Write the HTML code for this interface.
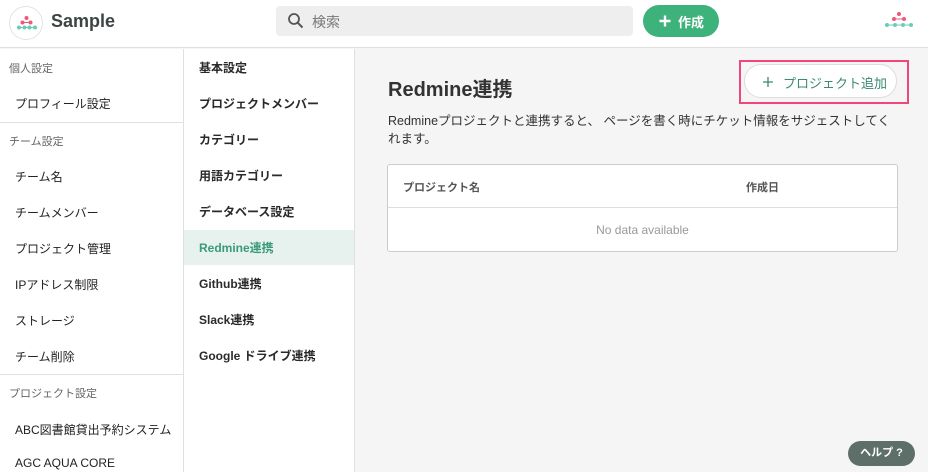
<!DOCTYPE html>
<html><head><meta charset="utf-8"><style>
*{box-sizing:border-box;margin:0;padding:0}
body{width:928px;height:472px;overflow:hidden;background:#f5f5f5;font-family:"Liberation Sans","Noto Sans CJK JP",sans-serif;color:#222;position:relative}
.hdr{position:absolute;left:0;top:0;width:928px;height:48px;background:#fff;border-bottom:1px solid #e0e0e0}
.abs{position:absolute}
.logo{left:9px;top:6px;width:34px;height:34px;border-radius:50%;border:1px solid #e3e3e3;background:#fff}
.title{left:51px;top:11px;font-size:18px;font-weight:bold;color:#3c4444}
.search{left:276px;top:6px;width:357px;height:30px;background:#eeeeee;border-radius:4px}
.search span{position:absolute;left:36px;top:6px;font-size:14px;color:#777}
.create{left:643px;top:5px;width:76px;height:32px;background:#3db37b;border-radius:16px;color:#fff;font-size:13px;font-weight:bold}
.side1{left:0;top:49px;width:184px;height:423px;background:#fff;border-right:1px solid #e0e0e0}
.side2{left:184px;top:49px;width:171px;height:423px;background:#fff;border-right:1px solid #e0e0e0}
.lbl{position:absolute;left:9px;font-size:11px;color:#666}
.it{position:absolute;left:15px;font-size:12px;color:#222}
.it2{position:absolute;left:15px;font-size:12px;font-weight:bold;color:#2a2a2a}
.div{position:absolute;left:0;width:183px;height:1px;background:#e0e0e0}
.active{position:absolute;left:0;top:181px;width:170px;height:35px;background:#e7f2ef}
</style></head><body>
<div class="hdr">
 <div class="abs logo"><svg width="34" height="34" viewBox="0 0 34 34"><g fill="#f0577a"><circle cx="16.5" cy="11" r="2"/><circle cx="12.5" cy="15.5" r="2"/><circle cx="20.5" cy="15.5" r="2"/></g><line x1="8.5" y1="20.5" x2="25" y2="20.5" stroke="#6ccbb5" stroke-width="1"/><line x1="12" y1="15.5" x2="21" y2="15.5" stroke="#f0577a" stroke-width="1"/><g fill="#6ccbb5"><circle cx="9" cy="20.5" r="2"/><circle cx="14.5" cy="20.5" r="2"/><circle cx="19.5" cy="20.5" r="2"/><circle cx="25" cy="20.5" r="2"/></g></svg></div>
 <div class="abs title">Sample</div>
 <div class="abs search"><svg class="abs" style="left:11px;top:6px" width="18" height="18" viewBox="0 0 18 18"><circle cx="7" cy="7" r="5" fill="none" stroke="#555" stroke-width="1.8"/><line x1="10.7" y1="10.7" x2="15.5" y2="15.5" stroke="#555" stroke-width="2"/></svg><span>検索</span></div>
 <div class="abs create"><svg class="abs" style="left:16px;top:10px" width="12" height="12" viewBox="0 0 12 12"><path d="M6 0.5V11.5M0.5 6H11.5" stroke="#fff" stroke-width="2.4"/></svg><span class="abs" style="left:35px;top:7px">作成</span></div>
 <svg class="abs" style="left:880px;top:10px" width="36" height="22" viewBox="0 0 36 22"><g fill="#f0577a"><circle cx="19" cy="4" r="2"/><circle cx="14" cy="9" r="2"/><circle cx="24" cy="9" r="2"/></g><line x1="14" y1="9" x2="24" y2="9" stroke="#f0577a"/><line x1="7" y1="15" x2="31" y2="15" stroke="#6ccbb5"/><g fill="#6ccbb5"><circle cx="7" cy="15" r="2"/><circle cx="15" cy="15" r="2"/><circle cx="23" cy="15" r="2"/><circle cx="31" cy="15" r="2"/></g></svg>
</div>
<div class="abs side1">
 <div class="lbl" style="top:11px">個人設定</div>
 <div class="it" style="top:46px">プロフィール設定</div>
 <div class="div" style="top:73px"></div>
 <div class="lbl" style="top:84px">チーム設定</div>
 <div class="it" style="top:119px">チーム名</div>
 <div class="it" style="top:155px">チームメンバー</div>
 <div class="it" style="top:191px">プロジェクト管理</div>
 <div class="it" style="top:227px">IPアドレス制限</div>
 <div class="it" style="top:263px">ストレージ</div>
 <div class="it" style="top:299px">チーム削除</div>
 <div class="div" style="top:325px"></div>
 <div class="lbl" style="top:336px">プロジェクト設定</div>
 <div class="it" style="top:372px">ABC図書館貸出予約システム</div>
 <div class="it" style="top:407px">AGC AQUA CORE</div>
</div>
<div class="abs side2">
 <div class="active"></div>
 <div class="it2" style="top:10px">基本設定</div>
 <div class="it2" style="top:46px">プロジェクトメンバー</div>
 <div class="it2" style="top:82px">カテゴリー</div>
 <div class="it2" style="top:118px">用語カテゴリー</div>
 <div class="it2" style="top:154px">データベース設定</div>
 <div class="it2" style="top:190px;color:#3a9a7a">Redmine連携</div>
 <div class="it2" style="top:226px">Github連携</div>
 <div class="it2" style="top:262px">Slack連携</div>
 <div class="it2" style="top:298px">Google ドライブ連携</div>
</div>
<div class="abs" style="left:388px;top:73px;font-size:20px;font-weight:bold;color:#333">Redmine連携</div>
<div class="abs" style="left:739px;top:60px;width:170px;height:44px;border:2px solid #f0467a"></div>
<div class="abs" style="left:744px;top:64px;width:153px;height:34px;border:1px solid #ddd;border-radius:17px;background:#fff;color:#3a8a74;font-size:13px"><svg class="abs" style="left:18px;top:12px" width="10" height="10" viewBox="0 0 10 10"><path d="M5 0V10M0 5H10" stroke="#3a8a74" stroke-width="1.3"/></svg><span class="abs" style="left:38px;top:8px">プロジェクト追加</span></div>
<div class="abs" style="left:388px;top:112px;width:508px;font-size:12.5px;line-height:18px;color:#333">Redmineプロジェクトと連携すると、 ページを書く時にチケット情報をサジェストしてくれます。</div>
<div class="abs" style="left:387px;top:164px;width:511px;height:88px;background:#fff;border:1px solid #ccc;border-radius:3px">
 <div class="abs" style="left:15px;top:14px;font-size:11px;font-weight:bold;color:#555">プロジェクト名</div>
 <div class="abs" style="left:358px;top:14px;font-size:11px;font-weight:bold;color:#555">作成日</div>
 <div class="abs" style="left:0;top:42px;width:509px;height:1px;background:#ddd"></div>
 <div class="abs" style="left:0;top:58px;width:509px;text-align:center;font-size:12px;color:#999">No data available</div>
</div>
<div class="abs" style="left:848px;top:441px;width:67px;height:25px;border-radius:13px;background:#5e6f69;color:#fff;font-size:11px;font-weight:bold;text-align:center;line-height:25px">ヘルプ ?</div>
</body></html>
